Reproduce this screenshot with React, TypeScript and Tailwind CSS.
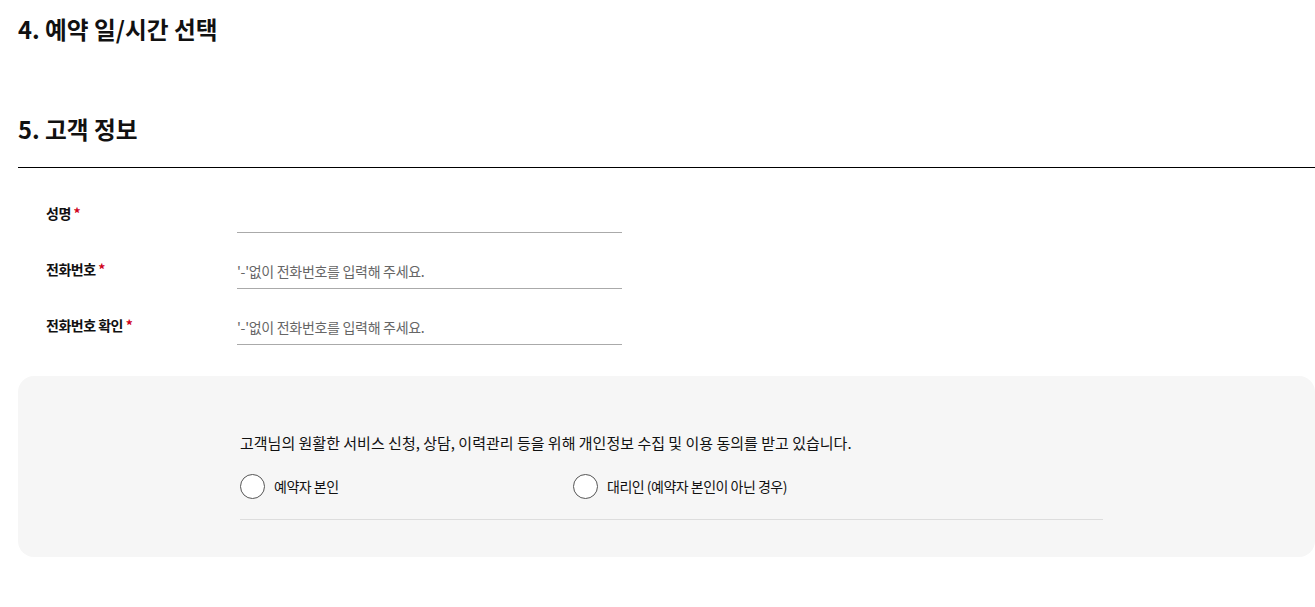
import React from "react";

const font = { fontFamily: '"Noto Sans CJK KR", "Noto Sans", sans-serif' };

const fields = [
  { label: "성명", placeholder: "" },
  { label: "전화번호", placeholder: "'-'없이 전화번호를 입력해 주세요." },
  { label: "전화번호 확인", placeholder: "'-'없이 전화번호를 입력해 주세요." },
];

export default function App() {
  return (
    <div className="w-[1315px] h-[607px] bg-white text-[#111] overflow-hidden pl-[18px]" style={font}>
      <h2 className="pt-[11px] text-[23.7px] font-bold leading-[36px]">4. 예약 일/시간 선택</h2>

      <h2 className="mt-[64px] text-[23.7px] font-bold leading-[36px]">5. 고객 정보</h2>
      <div className="mt-[20px] border-t border-black" />

      <div className="pt-[29px] flex flex-col gap-[20px]">
        {fields.map((f) => (
          <div key={f.label} className="flex items-end">
            <label className="w-[219px] pl-[28px] pb-[10px] text-[14px] font-bold tracking-[-0.5px] leading-[20px]">
              {f.label} <span className="text-[#d0021b]">*</span>
            </label>
            <input
              className="w-[385px] h-[36px] border-b border-[#aaa] text-[14px] outline-none tracking-[-0.3px] placeholder:text-[#666]"
              placeholder={f.placeholder}
              style={font}
            />
          </div>
        ))}
      </div>

      <div className="mt-[31px] h-[181px] bg-[#f6f6f6] rounded-[16px] pt-[56px] pl-[222px]">
        <p className="text-[15px] leading-[22px]">
          고객님의 원활한 서비스 신청, 상담, 이력관리 등을 위해 개인정보 수집 및 이용 동의를 받고 있습니다.
        </p>
        <div className="w-[863px] mt-[20px] pb-[20px] border-b border-[#ddd] flex">
          <label className="w-[333px] flex items-center gap-[9px] text-[14px] tracking-[-0.5px]">
            <span className="w-[25px] h-[25px] rounded-full border border-[#555] bg-white" />
            예약자 본인
          </label>
          <label className="flex items-center gap-[9px] text-[14px] tracking-[-0.5px]">
            <span className="w-[25px] h-[25px] rounded-full border border-[#555] bg-white" />
            대리인 (예약자 본인이 아닌 경우)
          </label>
        </div>
      </div>
    </div>
  );
}
